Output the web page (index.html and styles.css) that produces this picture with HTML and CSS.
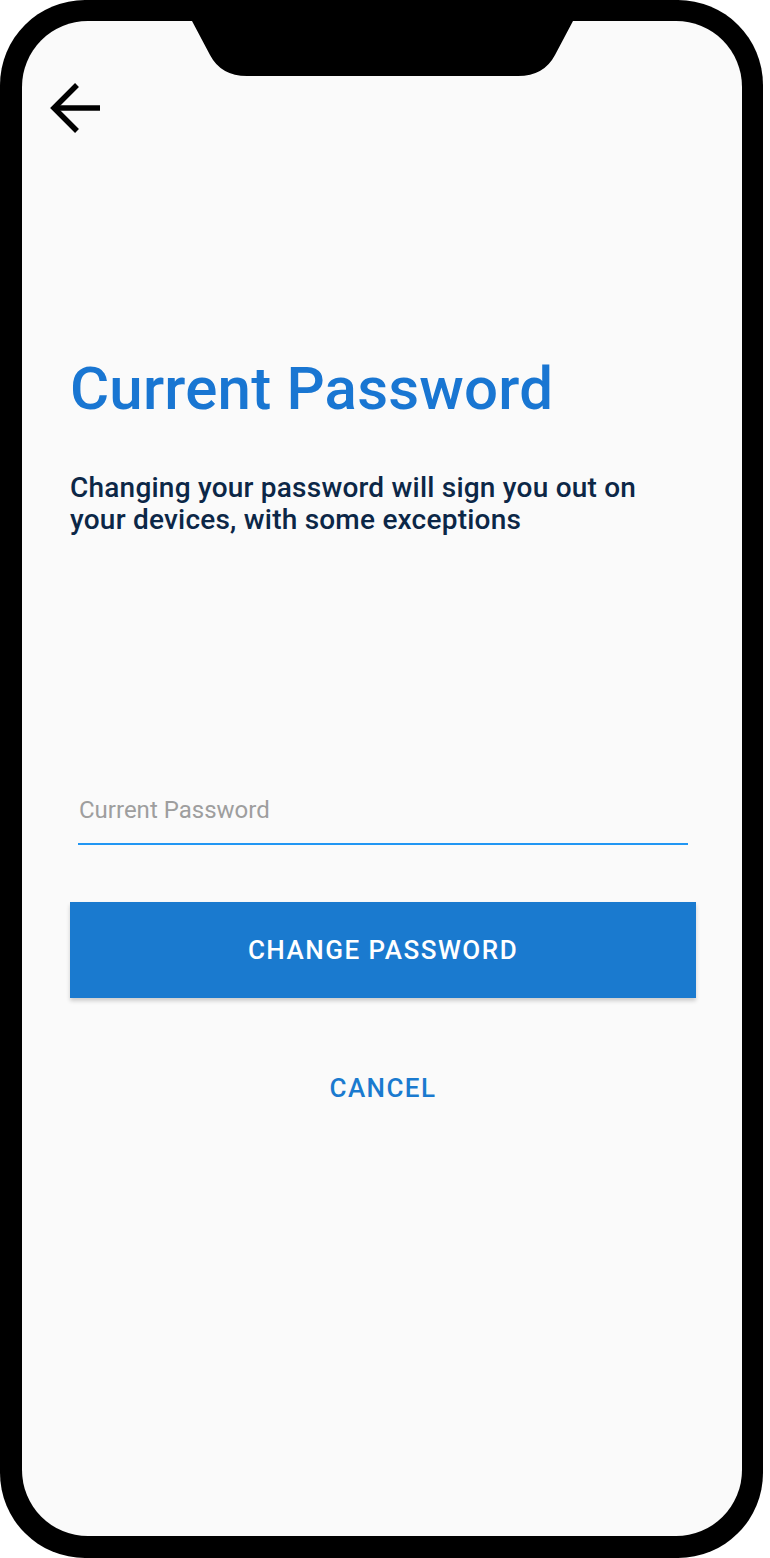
FILE: index.html
```html
<!DOCTYPE html>
<html lang="en">
<head>
<meta charset="utf-8">
<title>Current Password</title>
<link rel="stylesheet" href="styles.css">
</head>
<body>
<div class="phone">
  <div class="screen">
    <svg class="notch" width="720" height="58" viewBox="0 0 720 58" aria-hidden="true">
      <path d="M169,-2 L170,0 L188,34 Q199,55 225,55 L496,55 Q522,55 533,34 L551,0 L552,-2 Z" fill="#000"/>
    </svg>
    <header class="topbar">
      <svg class="back" width="56" height="56" viewBox="0 0 56 56" aria-label="Back">
        <path d="M29,5 L6,28 L29,51" fill="none" stroke="#000" stroke-width="5.5" stroke-linejoin="miter"/>
        <path d="M7,28 L52,28" fill="none" stroke="#000" stroke-width="5.5"/>
      </svg>
    </header>
    <main class="content">
      <h1 class="title">Current Password</h1>
      <p class="subtitle">Changing your password will sign you out on your devices, with some exceptions</p>
      <div class="field">
        <span class="placeholder">Current Password</span>
      </div>
      <button class="primary" type="button">CHANGE PASSWORD</button>
      <button class="text-btn" type="button">CANCEL</button>
    </main>
  </div>
</div>
</body>
</html>
```
FILE: styles.css
```css
* { box-sizing: border-box; }
html, body { margin: 0; padding: 0; background: #ffffff; }
body { font-family: Roboto, "Noto Sans", Arial, sans-serif; }

.phone {
  width: 763px;
  height: 1558px;
  background: #000;
  border-radius: 85px;
  padding: 21px 21px 22px 22px;
}
.screen {
  position: relative;
  width: 720px;
  height: 1515px;
  background: #fafafa;
  border-radius: 66px;
  overflow: hidden;
}
.notch {
  position: absolute;
  top: 0;
  left: 0;
  display: block;
}
.topbar {
  padding: 59px 0 0 26px;
  height: 115px;
}
.back { display: block; }

.content {
  padding: 0 46px 0 48px;
  display: flex;
  flex-direction: column;
}
.title {
  margin: 218px 0 0;
  font-size: 60px;
  line-height: 70px;
  font-weight: 500;
  color: #1976d2;
  letter-spacing: 0.2px;
}
.subtitle {
  margin: 48px 0 0;
  font-size: 28px;
  line-height: 32px;
  font-weight: 500;
  letter-spacing: 0.22px;
  color: #0c2747;
  max-width: 590px;
}
.field {
  margin: 259px 8px 0;
  padding-bottom: 18px;
  border-bottom: 2px solid #2196f3;
}
.placeholder {
  display: block;
  font-size: 24px;
  line-height: 30px;
  color: #9e9e9e;
  padding-left: 1px;
}
.primary {
  margin-top: 57px;
  height: 96px;
  width: 100%;
  border: 0;
  border-radius: 0;
  background: #1a7acf;
  color: #fff;
  font-family: Roboto, "Noto Sans", Arial, sans-serif;
  font-size: 26px;
  font-weight: 500;
  letter-spacing: 1.5px;
  box-shadow: 0 3px 4px rgba(0,0,0,0.18);
}
.text-btn {
  margin-top: 75px;
  align-self: center;
  background: none;
  border: 0;
  padding: 0;
  line-height: 30px;
  color: #1a7acf;
  font-family: Roboto, "Noto Sans", Arial, sans-serif;
  font-size: 26px;
  font-weight: 500;
  letter-spacing: 1.4px;
}
```
